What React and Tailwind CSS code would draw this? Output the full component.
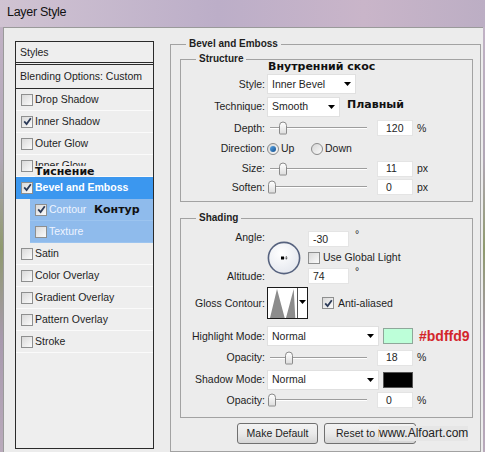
import React from "react";

const note = "font-['DejaVu_Sans',sans-serif] font-bold text-[11px] text-[#111]";

function Check({ on }) {
  return (
    <span className="flex h-[12px] w-[12px] shrink-0 items-center justify-center border border-[#8e8f8f] bg-gradient-to-br from-[#d9d9d9] to-[#fbfbfb]">
      {on && (
        <svg width="9" height="9" viewBox="0 0 9 9">
          <path d="M1.2 4.4 3.6 7 7.8 1.3" fill="none" stroke="#2b3a58" strokeWidth="1.8" />
        </svg>
      )}
    </span>
  );
}

function Radio({ on }) {
  return (
    <span className="flex h-[12px] w-[12px] shrink-0 items-center justify-center rounded-full border border-[#8a8a8a] bg-gradient-to-br from-[#d6d6d6] to-[#fafafa]">
      {on && <span className="h-[6px] w-[6px] rounded-full bg-gradient-to-br from-[#5aa6e6] to-[#124f8f]" />}
    </span>
  );
}

function StyleRow({ label, on, children }) {
  return (
    <div className="relative flex h-[22px] items-center gap-[2px] border-b border-[#fafafa] pl-[5px]">
      <Check on={on} />
      <span>{label}</span>
      {children}
    </div>
  );
}

function Label({ children }) {
  return <div className="w-[84px] shrink-0 text-right">{children}</div>;
}

function Arrow() {
  return (
    <svg width="7" height="4" viewBox="0 0 7 4" className="shrink-0">
      <path d="M0 0h7L3.5 4z" fill="#000" />
    </svg>
  );
}

function Select({ value, className }) {
  return (
    <div className={`ml-[2px] flex h-[20px] items-center justify-between border border-[#e0e0e0] bg-white pl-[4px] pr-[4px] ${className}`}>
      <span>{value}</span>
      <Arrow />
    </div>
  );
}

function Field({ value, className }) {
  return (
    <div className={`flex h-[16px] items-center border border-[#e4e4e4] bg-white ${className}`}>{value}</div>
  );
}

function Slider({ thumb }) {
  return (
    <div className="relative ml-[2px] h-full w-[103px] shrink-0">
      <div className="absolute left-[3px] right-[3px] top-1/2 h-[2px] -translate-y-1/2 border-t border-b border-t-[#9d9d9d] border-b-white" />
      <div
        className="absolute top-1/2 h-[13px] w-[8px] -translate-y-1/2 rounded-t-[4px] rounded-b-[1px] border border-[#8a8a8a] bg-gradient-to-b from-white to-[#dedede]"
        style={{ left: thumb }}
      />
    </div>
  );
}

function SliderRow({ label, thumb, value, unit, className }) {
  return (
    <div className={`flex items-center ${className}`}>
      <Label>{label}</Label>
      <Slider thumb={thumb} />
      <Field value={value} className="ml-[7px] w-[36px] pl-[8px]" />
      <span className="ml-[4px]">{unit}</span>
    </div>
  );
}

function Group({ title, className, children }) {
  return (
    <div className={`relative border border-[#a2a2a2] ${className}`}>
      <span className="absolute left-[15px] top-[-7px] bg-[#ececec] px-[3px] text-[10px] font-bold leading-[12px]">
        {title}
      </span>
      {children}
    </div>
  );
}

function Button({ children, className }) {
  return (
    <div className={`flex h-[21px] items-center rounded-[3px] border border-[#707070] bg-gradient-to-b from-[#f3f3f3] via-[#eaeaea] to-[#d5d5d5] ${className}`}>
      {children}
    </div>
  );
}

export default function App() {
  return (
    <div className="h-[452px] w-[485px] overflow-hidden bg-[linear-gradient(180deg,#c4b4c8,#b1a7b6_35%,#8f9a6e_55%,#a89aae_75%,#b9aabb)] font-['Liberation_Sans',Arial,sans-serif] text-[10.5px] leading-[13px] text-[#1e1e1e]">
      <div className="flex h-[27px] items-center bg-[linear-gradient(90deg,#d0c3d2,#bcaec8_45%,#c9b5c9_75%,#bcaec4)] px-[7px] pb-[3px] text-[12.5px] tracking-[-0.3px] text-[#111]">
        Layer Style
      </div>

      <div className="ml-[3px] flex h-[425px] w-[480px] border-l border-t border-[#9a9a9a] bg-[#ececec] pl-[11px] pt-[13px]">
        {/* left list */}
        <div className="h-[408px] w-[139px] shrink-0 border border-[#2a2a2a] bg-[#eeeeee]">
          <div className="flex h-[21px] items-center border-b border-[#2a2a2a] pl-[4px]">Styles</div>
          <div className="mt-[1px] flex h-[25px] items-center border-y border-[#2a2a2a] pl-[4px]">
            Blending Options: Custom
          </div>
          <StyleRow label="Drop Shadow" />
          <StyleRow label="Inner Shadow" on />
          <StyleRow label="Outer Glow" />
          <StyleRow label="Inner Glow">
            <span className={`absolute left-[19px] top-[11px] bg-[#eeeeee] leading-[11px] ${note}`}>Тиснение</span>
          </StyleRow>
          <div className="flex h-[22px] items-center gap-[2px] border-b border-[#3b97ef] bg-[#3b97ef] pl-[5px] font-bold text-white">
            <Check on />
            <span>Bevel and Emboss</span>
          </div>
          <div className="relative ml-[14px] flex h-[22px] items-center gap-[2px] border-b border-[#9cc4ef] bg-[#8fbbec] pl-[5px] text-[#eef4ff]">
            <Check on />
            <span>Contour</span>
            <span className={`absolute left-[64px] top-[4px] ${note}`}>Контур</span>
          </div>
          <div className="ml-[14px] flex h-[22px] items-center gap-[2px] border-b border-[#9cc4ef] bg-[#8fbbec] pl-[5px] text-[#eef4ff]">
            <Check />
            <span>Texture</span>
          </div>
          <StyleRow label="Satin" />
          <StyleRow label="Color Overlay" />
          <StyleRow label="Gradient Overlay" />
          <StyleRow label="Pattern Overlay" />
          <StyleRow label="Stroke" />
        </div>

        {/* right side */}
        <Group title="Bevel and Emboss" className="ml-[16px] mt-[3px] h-[408px] w-[311px] shrink-0">
          <Group title="Structure" className="ml-[9px] mt-[14px] h-[143px] w-[293px]">
            <div className={`ml-[87px] h-[13px] leading-[13px] ${note}`}>Внутренний скос</div>
            <div className="flex h-[22px] items-center">
              <Label>Style:</Label>
              <Select value="Inner Bevel" className="w-[89px]" />
            </div>
            <div className="flex h-[23px] items-center">
              <Label>Technique:</Label>
              <Select value="Smooth" className="w-[73px]" />
              <span className={`ml-[7px] -mt-[5px] ${note}`}>Плавный</span>
            </div>
            <SliderRow label="Depth:" thumb={12} value="120" unit="%" className="h-[20px]" />
            <div className="flex h-[21px] items-center">
              <Label>Direction:</Label>
              <div className="ml-[2px] flex w-[44px] items-center gap-[2px]">
                <Radio on />
                <span>Up</span>
              </div>
              <div className="flex items-center gap-[2px]">
                <Radio />
                <span>Down</span>
              </div>
            </div>
            <SliderRow label="Size:" thumb={12} value="11" unit="px" className="h-[19px]" />
            <SliderRow label="Soften:" thumb={1} value="0" unit="px" className="h-[18px]" />
          </Group>

          <Group title="Shading" className="ml-[9px] mt-[16px] h-[200px] w-[293px]">
            <div className="mt-[11px] flex h-[55px] items-start">
              <div className="w-[84px] shrink-0 text-right leading-[14px]">
                <div>Angle:</div>
                <div className="mt-[25px]">Altitude:</div>
              </div>
              <svg width="34" height="34" viewBox="0 0 34 34" className="ml-[2px] mt-[11px] shrink-0">
                <defs>
                  <radialGradient id="ag" cx="40%" cy="35%" r="70%">
                    <stop offset="0" stopColor="#ffffff" />
                    <stop offset="1" stopColor="#e4e7ee" />
                  </radialGradient>
                </defs>
                <circle cx="17" cy="17" r="15.6" fill="url(#ag)" stroke="#56627e" strokeWidth="1.6" />
                <rect x="14" y="15.5" width="3" height="3" fill="#000" />
                <path d="M17.5 17h3.5M19.3 15.2v3.6" stroke="#222" strokeWidth="0.8" strokeDasharray="1 0.6" />
              </svg>
              <div className="ml-[7px] mt-[1px] flex flex-col">
                <div className="flex items-start">
                  <Field value="-30" className="w-[41px] pl-[4px]" />
                  <span className="ml-[6px] -mt-[3px]">°</span>
                </div>
                <div className="mt-[3px] flex h-[15px] items-center gap-[3px]">
                  <Check />
                  <span>Use Global Light</span>
                </div>
                <div className="mt-[3px] flex items-start">
                  <Field value="74" className="w-[41px] pl-[4px]" />
                  <span className="ml-[6px] -mt-[3px]">°</span>
                </div>
              </div>
            </div>

            <div className="mt-[2px] flex h-[32px] items-center">
              <Label>Gloss Contour:</Label>
              <div className="ml-[2px] flex h-[32px] w-[41px] shrink-0 border border-[#1a1a1a] bg-white">
                <svg width="29" height="30" viewBox="0 0 29 30" className="shrink-0">
                  <path d="M2 30 9 1 16.7 30h1.3l7.7-29 1.6 29z" fill="#8c8c8c" />
                </svg>
                <div className="flex flex-1 items-center justify-center border-l border-[#555] pb-[2px]">
                  <Arrow />
                </div>
              </div>
              <div className="ml-[14px] flex items-center gap-[4px]">
                <Check on />
                <span>Anti-aliased</span>
              </div>
            </div>

            <div className="mt-[6px] flex h-[22px] items-center">
              <Label>Highlight Mode:</Label>
              <Select value="Normal" className="w-[112px] pr-[3px]" />
              <div className="ml-[4px] h-[16px] w-[30px] shrink-0 border border-[#8fa79a] bg-[#bdffd9]" />
              <span className="ml-[6px] text-[14px] font-bold text-[#d3262b]">#bdffd9</span>
            </div>
            <SliderRow label="Opacity:" thumb={18} value="18" unit="%" className="h-[21px]" />
            <div className="flex h-[23px] items-center">
              <Label>Shadow Mode:</Label>
              <Select value="Normal" className="w-[112px] pr-[3px]" />
              <div className="ml-[4px] h-[16px] w-[30px] shrink-0 border border-[#555] bg-black" />
            </div>
            <SliderRow label="Opacity:" thumb={1} value="0" unit="%" className="h-[18px]" />
          </Group>

          <div className="relative ml-[9px] mt-[5px] flex h-[21px]">
            <Button className="ml-[57px] w-[81px] justify-center">Make Default</Button>
            <Button className="ml-[6px] w-[92px] overflow-hidden whitespace-nowrap pl-[11px]">Reset to Default</Button>
            <span className="absolute left-[199px] top-[3px] bg-[#e6e6e6] text-[12px] leading-[15px] text-[#222]">
              www.Alfoart.com
            </span>
          </div>
        </Group>
      </div>
    </div>
  );
}
